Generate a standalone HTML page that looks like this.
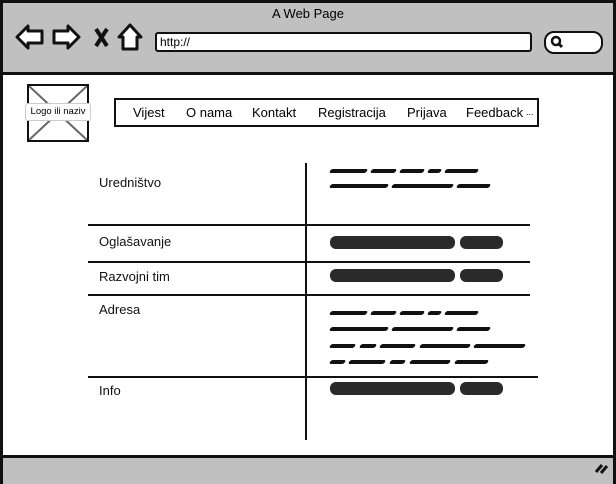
<!DOCTYPE html><html><head><style>
body{margin:0;width:616px;height:484px;position:relative;background:#fff;font-family:"Liberation Sans",sans-serif;overflow:hidden}
.a{position:absolute}
.s{position:absolute;height:4px;background:#111;border-radius:2px;transform:skewX(-30deg)}
.t{position:absolute;height:13px;background:#2a2a2a;border-radius:6px}
.h{position:absolute;height:2px;background:#111}
.lb{position:absolute;font-size:13px;color:#111}
</style></head><body>
<div class="a" style="left:0;top:0;width:610px;height:478px;border:3px solid #111"></div>
<div class="a" style="left:3px;top:3px;width:610px;height:69px;background:#c0c0c0;border-bottom:3px solid #111"></div>
<div class="a" style="left:3px;top:455px;width:610px;height:26px;background:#c0c0c0;border-top:3px solid #111"></div>
<div class="a" style="left:0;top:6px;width:616px;text-align:center;font-size:13px">A Web Page</div>
<svg class="a" style="left:14px;top:22px" width="130" height="30" viewBox="0 0 130 30">
<path d="M3 15 L14 4 L14 9 L28 9 L28 21 L14 21 L14 26 Z" fill="#fff" stroke="#111" stroke-width="3" stroke-linejoin="round"/>
<path d="M65 15 L54 4 L54 9 L40 9 L40 21 L54 21 L54 26 Z" fill="#fff" stroke="#111" stroke-width="3" stroke-linejoin="round"/>
<path d="M82 7 L93 24 M93 7 L82 24" stroke="#111" stroke-width="4"/>
<path d="M116 3 L105 15 L109 15 L109 27 L123 27 L123 15 L127 15 Z" fill="#fff" stroke="#111" stroke-width="3" stroke-linejoin="round"/>
</svg>
<div class="a" style="left:155px;top:32px;width:370px;height:16px;background:#fff;border:2.5px solid #111;border-radius:3px;font-size:12px;line-height:16px;padding-left:3px">http://</div>
<div class="a" style="left:544px;top:31px;width:55px;height:19px;background:#fff;border:2.5px solid #111;border-radius:10px"></div>
<svg class="a" style="left:549px;top:34px" width="16" height="16"><circle cx="7" cy="7" r="4" fill="none" stroke="#111" stroke-width="2.5"/><path d="M9 9 L13 13" stroke="#111" stroke-width="3"/></svg>
<svg class="a" style="left:594px;top:460px" width="16" height="16"><path d="M2 12 L8 5 M7 13 L13 6" stroke="#111" stroke-width="3"/></svg>
<div class="a" style="left:27px;top:84px;width:58px;height:54px;border:2.5px solid #111;background:#fff"></div>
<svg class="a" style="left:29px;top:86px" width="58" height="54"><path d="M0 0 L58 54 M58 0 L0 54" stroke="#666" stroke-width="2"/></svg>
<div class="a" style="left:25px;top:103px;width:64px;height:16px;background:#fff;border:1px solid #ccc;border-radius:3px;font-size:9.5px;line-height:16px;text-align:center">Logo ili naziv</div>
<div class="a" style="left:114px;top:98px;width:421px;height:25px;border:2.5px solid #111;font-size:13px;line-height:25px">
<span class="a" style="left:17px">Vijest</span><span class="a" style="left:70px">O nama</span><span class="a" style="left:136px">Kontakt</span><span class="a" style="left:202px">Registracija</span><span class="a" style="left:291px">Prijava</span><span class="a" style="left:350px">Feedback</span><span class="a" style="left:410px;font-size:9px">...</span></div>
<div class="lb" style="left:99px;top:175px">Uredništvo</div>
<div class="lb" style="left:99px;top:234px">Oglašavanje</div>
<div class="lb" style="left:99px;top:269px">Razvojni tim</div>
<div class="lb" style="left:99px;top:302px">Adresa</div>
<div class="lb" style="left:99px;top:383px">Info</div>
<div class="a" style="left:305px;top:163px;width:2px;height:277px;background:#111"></div>
<div class="h" style="left:88px;top:224px;width:442px"></div>
<div class="h" style="left:88px;top:261px;width:442px"></div>
<div class="h" style="left:88px;top:294px;width:442px"></div>
<div class="h" style="left:88px;top:376px;width:450px"></div>
<div class="s" style="left:330px;top:169px;width:37px"></div><div class="s" style="left:371px;top:169px;width:25px"></div><div class="s" style="left:400px;top:169px;width:24px"></div><div class="s" style="left:428px;top:169px;width:13px"></div><div class="s" style="left:445px;top:169px;width:33px"></div>
<div class="s" style="left:330px;top:184px;width:58px"></div><div class="s" style="left:392px;top:184px;width:61px"></div><div class="s" style="left:457px;top:184px;width:33px"></div>
<div class="t" style="left:330px;top:236px;width:125px"></div><div class="t" style="left:460px;top:236px;width:43px"></div>
<div class="t" style="left:330px;top:269px;width:125px"></div><div class="t" style="left:460px;top:269px;width:43px"></div>
<div class="t" style="left:330px;top:382px;width:125px"></div><div class="t" style="left:460px;top:382px;width:43px"></div>
<div class="s" style="left:330px;top:311px;width:37px"></div><div class="s" style="left:371px;top:311px;width:25px"></div><div class="s" style="left:400px;top:311px;width:24px"></div><div class="s" style="left:428px;top:311px;width:13px"></div><div class="s" style="left:445px;top:311px;width:33px"></div>
<div class="s" style="left:330px;top:327px;width:58px"></div><div class="s" style="left:392px;top:327px;width:61px"></div><div class="s" style="left:457px;top:327px;width:33px"></div>
<div class="s" style="left:330px;top:344px;width:25px"></div><div class="s" style="left:360px;top:344px;width:16px"></div><div class="s" style="left:380px;top:344px;width:35px"></div><div class="s" style="left:420px;top:344px;width:50px"></div><div class="s" style="left:474px;top:344px;width:51px"></div>
<div class="s" style="left:330px;top:360px;width:15px"></div><div class="s" style="left:349px;top:360px;width:36px"></div><div class="s" style="left:390px;top:360px;width:15px"></div><div class="s" style="left:410px;top:360px;width:40px"></div><div class="s" style="left:455px;top:360px;width:33px"></div>
</body></html>
